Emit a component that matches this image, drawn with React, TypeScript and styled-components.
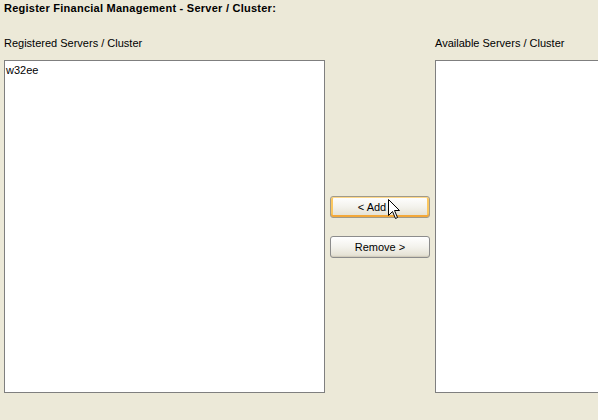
import styled, { createGlobalStyle } from 'styled-components'

const GlobalStyle = createGlobalStyle`
  html, body {
    margin: 0;
    padding: 0;
    background: #ece9d8;
    overflow: hidden;
  }
  body {
    font-family: "Liberation Sans", Arial, sans-serif;
    font-size: 11px;
    color: #000;
  }
`

const registered: string[] = ['w32ee']
const available: string[] = []

const Page = styled.div`
  width: 598px;
  height: 420px;
  padding: 0 4px;
  box-sizing: border-box;
  background: #ece9d8;
  overflow: hidden;
`

const Title = styled.div`
  font-weight: bold;
  font-size: 11px;
  letter-spacing: 0.25px;
  line-height: 13px;
  padding-top: 2px;
  height: 30px;
`

const Columns = styled.div`
  display: flex;
  align-items: stretch;
  width: 800px;
`

const Column = styled.div`
  display: flex;
  flex-direction: column;
  width: 321px;
  flex-shrink: 0;
`

const Label = styled.div`
  line-height: 13px;
  height: 15px;
  padding-top: 5px;
  margin-bottom: 8px;
`

const ListBox = styled.div`
  height: 333px;
  box-sizing: border-box;
  background: #fff;
  border: 1px solid #7f7f7f;
  padding: 2px 1px;
`

const ListItem = styled.div`
  line-height: 14px;
`

const Middle = styled.div`
  width: 110px;
  flex-shrink: 0;
  display: flex;
  flex-direction: column;
  align-items: center;
  justify-content: center;
  gap: 18px;
  padding-top: 28px;
`

const Button = styled.button<{ $hover?: boolean; $shift?: number }>`
  position: relative;
  width: 100px;
  height: 22px;
  box-sizing: border-box;
  font-family: "Liberation Sans", Arial, sans-serif;
  font-size: 11px;
  color: #000;
  border: 1px solid ${(p) => (p.$hover ? '#a09a8a' : '#8c8c8c')};
  border-radius: 3px;
  background: linear-gradient(#ffffff 0%, #f3f2ec 50%, #e6e3d6 90%, #d6d0c0 100%);
  box-shadow: ${(p) =>
    p.$hover
      ? 'inset 0 1px 0 #ffd98a, inset 0 -2px 0 #f3a83a, inset 2px 0 0 #fbc75f, inset -2px 0 0 #fbc75f'
      : 'inset 0 -1px 0 #d2cdbd'};
  padding: 0 ${(p) => p.$shift ?? 0}px 0 0;
  cursor: default;
`

const Cursor = styled.svg`
  position: absolute;
  left: 57px;
  top: 2px;
  pointer-events: none;
`

const App = () => {
  return (
    <>
      <GlobalStyle />
      <Page>
        <Title>Register Financial Management - Server / Cluster:</Title>
        <Columns>
          <Column>
            <Label>Registered Servers / Cluster</Label>
            <ListBox>
              {registered.map((r) => (
                <ListItem key={r}>{r}</ListItem>
              ))}
            </ListBox>
          </Column>
          <Middle>
            <Button $hover $shift={16}>
              &lt; Add
              <Cursor width="13" height="21" viewBox="0 0 13 21">
                <path
                  d="M0.5 0.5 L0.5 16.5 L4.5 12.5 L7.5 19.5 L9.5 18.5 L6.5 11.5 L11.5 11.5 Z"
                  fill="#fff"
                  stroke="#000"
                  strokeWidth="1"
                />
              </Cursor>
            </Button>
            <Button>Remove &gt;</Button>
          </Middle>
          <Column>
            <Label>Available Servers / Cluster</Label>
            <ListBox>
              {available.map((r) => (
                <ListItem key={r}>{r}</ListItem>
              ))}
            </ListBox>
          </Column>
        </Columns>
      </Page>
    </>
  )
}

export default App
